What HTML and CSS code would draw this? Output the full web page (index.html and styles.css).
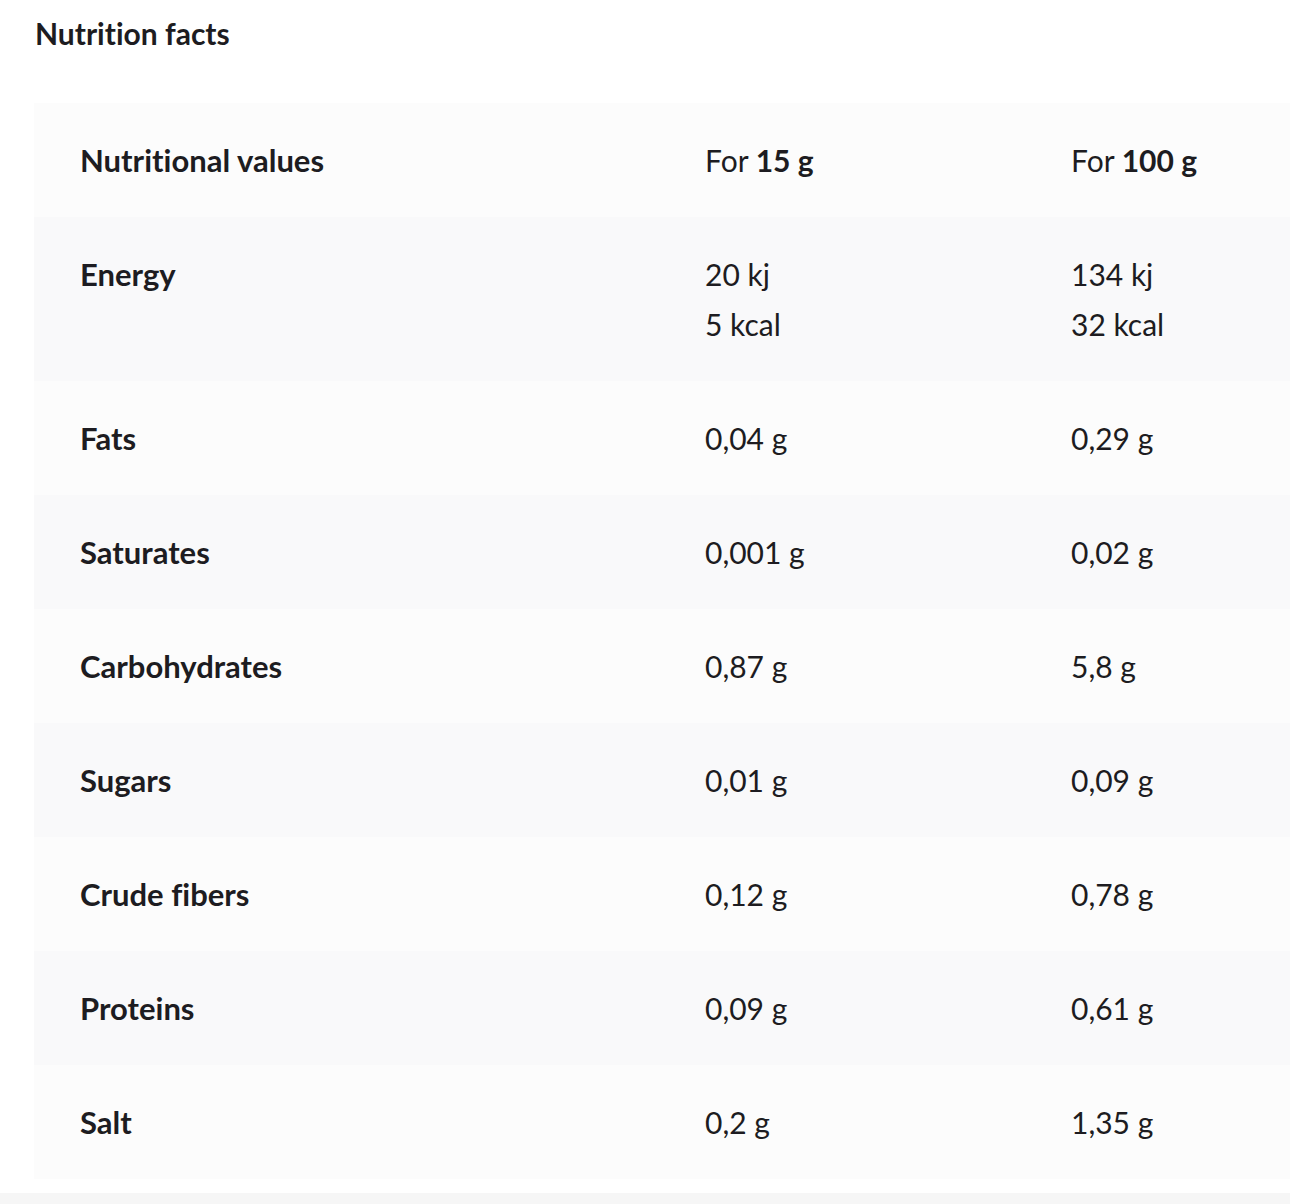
FILE: index.html
```html
<!DOCTYPE html>
<html lang="en">
<head>
<meta charset="utf-8">
<title>Nutrition facts</title>
<link rel="stylesheet" href="styles.css">
</head>
<body>
<h2 class="title">Nutrition facts</h2>
<table class="facts">
  <tr class="row light">
    <td class="label">Nutritional values</td>
    <td class="val">For <b>15 g</b></td>
    <td class="val">For <b>100 g</b></td>
  </tr>
  <tr class="row dark">
    <td class="label">Energy</td>
    <td class="val">20 kj<br>5 kcal</td>
    <td class="val">134 kj<br>32 kcal</td>
  </tr>
  <tr class="row light">
    <td class="label">Fats</td>
    <td class="val">0,04 g</td>
    <td class="val">0,29 g</td>
  </tr>
  <tr class="row dark">
    <td class="label">Saturates</td>
    <td class="val">0,001 g</td>
    <td class="val">0,02 g</td>
  </tr>
  <tr class="row light">
    <td class="label">Carbohydrates</td>
    <td class="val">0,87 g</td>
    <td class="val">5,8 g</td>
  </tr>
  <tr class="row dark">
    <td class="label">Sugars</td>
    <td class="val">0,01 g</td>
    <td class="val">0,09 g</td>
  </tr>
  <tr class="row light">
    <td class="label">Crude fibers</td>
    <td class="val">0,12 g</td>
    <td class="val">0,78 g</td>
  </tr>
  <tr class="row dark">
    <td class="label">Proteins</td>
    <td class="val">0,09 g</td>
    <td class="val">0,61 g</td>
  </tr>
  <tr class="row light">
    <td class="label">Salt</td>
    <td class="val">0,2 g</td>
    <td class="val">1,35 g</td>
  </tr>
</table>
<div class="bottom"></div>
</body>
</html>
```
FILE: styles.css
```css
html, body {
  margin: 0;
  padding: 0;
  background: #ffffff;
}
body {
  font-family: Lato, "Liberation Sans", sans-serif;
  color: #1d1c21;
  overflow: hidden;
  font-variant-ligatures: none;
  font-feature-settings: "liga" 0, "dlig" 0;
}
.title {
  margin: 0;
  padding: 13px 0 0 35px;
  font-size: 30px;
  line-height: 40px;
  font-weight: 700;
  height: 103px;
  box-sizing: border-box;
}
.facts {
  margin-left: 34px;
  width: 1256px;
  border-collapse: collapse;
  line-height: 50px;
}
.facts td {
  padding: 32px 0;
  vertical-align: top;
}
.light { background: #fcfcfc; }
.dark { background: #f9f9fa; }
.label {
  padding-left: 46px !important;
  width: 625px;
  font-size: 31px;
  font-weight: 700;
}
.val {
  font-size: 30px;
  font-weight: 400;
}
.val:nth-child(2) { width: 366px; }
.val b { font-weight: 700; }
.bottom {
  margin-top: 14px;
  height: 20px;
  background: #f6f6f6;
}
```
